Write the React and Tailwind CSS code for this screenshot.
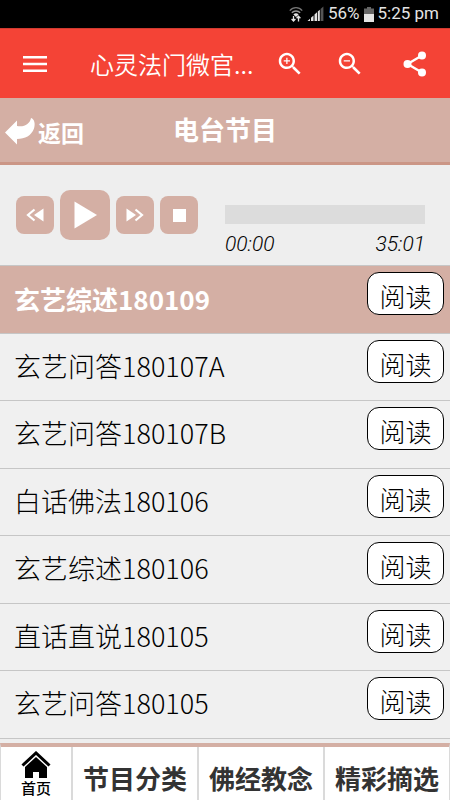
import React, { useState } from 'react';

const programs = [
  '玄艺综述180109',
  '玄艺问答180107A',
  '玄艺问答180107B',
  '白话佛法180106',
  '玄艺综述180106',
  '直话直说180105',
  '玄艺问答180105',
];

const tabs = ['节目分类', '佛经教念', '精彩摘选'];

const StatusBar = () => (
  <div className="flex h-7 items-center justify-end bg-black pr-[11px] font-['Roboto','Noto_Sans_CJK_SC',sans-serif] text-[17px] text-[#e4e4e4]">
    <svg width="14" height="16" viewBox="0 0 14 16" fill="none" className="mr-1">
      <path d="M0.8 4.6C4.2 0.6 9.8 0.6 13.2 4.6" stroke="#777" strokeWidth="1.4" />
      <path d="M2.8 6.8C5 4.4 9 4.4 11.2 6.8" stroke="#999" strokeWidth="1.3" />
      <path d="M4.4 8.4C5.8 7 8.2 7 9.6 8.4L7 11z" fill="#e4e4e4" />
      <path d="M4.5 10v5M2.6 13l1.9 2 1.9-2M9.5 15.5v-5M7.6 12.3l1.9-2 1.9 2" stroke="#e4e4e4" strokeWidth="1.3" />
    </svg>
    <svg width="17" height="16" viewBox="0 0 17 16" className="mr-1">
      <path d="M0.5 15L3 12.700V15zM4 11.800l2.500-2.300V15H4zM7.500 8.600L10 6.300V15H7.500z" fill="#e4e4e4" />
      <path d="M10.800 5.600l2-1.900V15h-2z" fill="#e4e4e4" />
      <path d="M13.600 3l2.800-2.500V15h-2.800z" fill="#555" />
    </svg>
    <span>56%</span>
    <svg width="10" height="15" viewBox="0 0 10 15" className="mx-1">
      <path d="M3 0h4v1.5h3v6H0v-6h3z" fill="#666" />
      <path d="M0 7h10v8H0z" fill="#e4e4e4" />
    </svg>
    <span>5:25 pm</span>
  </div>
);

const AppBar = () => (
  <header className="flex h-[70px] items-center border-t border-[#d03a30] bg-[#f44336] px-[23px] text-white">
    <button aria-label="菜单">
      <svg width="24" height="18" viewBox="0 0 24 18" fill="currentColor">
        <path d="M0 1h24v2.600H0zM0 7.700h24v2.600H0zM0 14.400h24V17H0z" />
      </svg>
    </button>
    <h1 className="ml-[43px] flex-1 text-2xl font-[350] whitespace-nowrap">心灵法门微官...</h1>
    <button aria-label="放大" className="mr-[30px]">
      <svg width="30" height="30" viewBox="0 0 24 24" fill="currentColor">
        <path d="M15.500 14h-.79l-.28-.27C15.410 12.590 16 11.110 16 9.500 16 5.910 13.090 3 9.500 3S3 5.910 3 9.500 5.910 16 9.500 16c1.610 0 3.090-.59 4.230-1.570l.27.28v.79l5 4.990L20.490 19l-4.990-5zm-6 0C7.010 14 5 11.990 5 9.500S7.010 5 9.500 5 14 7.010 14 9.500 11.990 14 9.500 14zm2.500-4h-2v2H9v-2H7V9h2V7h1v2h2v1z" />
      </svg>
    </button>
    <button aria-label="缩小" className="mr-[38px]">
      <svg width="30" height="30" viewBox="0 0 24 24" fill="currentColor">
        <path d="M15.500 14h-.79l-.28-.27C15.410 12.590 16 11.110 16 9.500 16 5.910 13.090 3 9.500 3S3 5.910 3 9.500 5.910 16 9.500 16c1.610 0 3.090-.59 4.230-1.570l.27.28v.79l5 4.990L20.490 19l-4.990-5zm-6 0C7.010 14 5 11.990 5 9.500S7.010 5 9.500 5 14 7.010 14 9.500 11.990 14 9.500 14zM7 9h5v1H7z" />
      </svg>
    </button>
    <button aria-label="分享">
      <svg width="24" height="26" viewBox="0 0 24 26" fill="currentColor">
        <path d="M4.500 13L19 4.500M4.500 13L19 21.500" stroke="currentColor" strokeWidth="2.400" />
        <circle cx="4.500" cy="13" r="4" />
        <circle cx="19" cy="4.500" r="4" />
        <circle cx="19" cy="21.500" r="4" />
      </svg>
    </button>
  </header>
);

const PageHeader = () => (
  <div className="grid h-[67px] grid-cols-[1fr_auto_1fr] items-center border-b-[3px] border-[#cb9686] bg-[#d4afa4] font-bold text-white">
    <a href="#back" className="flex items-center gap-[2px] pt-1 pl-1 text-[23px]">
      <svg width="32" height="28" viewBox="0 0 32 28" fill="currentColor">
        <path d="M1 14.500L13 2.500v5.500C20 9.500 26 6 27 0c3.500 1 4.500 6 3 10.500-2.500 7-9 10.500-17 10.500v5.500z" />
      </svg>
      返回
    </a>
    <h2 className="pb-1 text-[26px]">电台节目</h2>
  </div>
);

const Player = () => {
  const [playing, setPlaying] = useState(false);
  const small = 'flex h-[38px] w-[38px] items-center justify-center rounded-lg bg-[#d4afa4]';

  return (
    <section className="flex h-[100px] items-center justify-between pr-[25px] pl-4">
      <div className="flex items-center gap-[6px] text-white">
        <button aria-label="快退" className={small}>
          <svg width="18" height="14" viewBox="0 0 18 14">
            <path d="M8.500 1.500L2 7l6.500 5.500" fill="none" stroke="currentColor" strokeWidth="2.200" />
            <path d="M17.500 0.500v13L8 7z" fill="currentColor" />
          </svg>
        </button>
        <button
          aria-label={playing ? '暂停' : '播放'}
          onClick={() => setPlaying(!playing)}
          className="flex h-[50px] w-[50px] items-center justify-center rounded-[10px] bg-[#d4afa4]"
        >
          <svg width="24" height="28" viewBox="0 0 24 28" fill="currentColor">
            {playing ? <path d="M3 2h6v24H3zM15 2h6v24h-6z" /> : <path d="M1.500 0.500v27L24 14z" />}
          </svg>
        </button>
        <button aria-label="快进" className={small}>
          <svg width="18" height="14" viewBox="0 0 18 14">
            <path d="M9.500 1.500L16 7l-6.500 5.500" fill="none" stroke="currentColor" strokeWidth="2.200" />
            <path d="M0.500 0.500v13L10 7z" fill="currentColor" />
          </svg>
        </button>
        <button aria-label="停止" className={small}>
          <span className="h-[13px] w-[13px] bg-white" />
        </button>
      </div>
      <div className="w-[200px] pt-8">
        <progress
          aria-label="播放进度"
          value="0"
          max="2101"
          className="block h-[19px] w-full appearance-none bg-[#dcdcdc] [&::-webkit-progress-bar]:bg-[#dcdcdc] [&::-webkit-progress-value]:bg-[#d4afa4]"
        />
        <div className="flex justify-between pt-[6px] font-['Roboto',sans-serif] text-[21px] leading-7 font-light text-black italic">
          <span>00:00</span>
          <span>35:01</span>
        </div>
      </div>
    </section>
  );
};

const ProgramRow = ({ title, active, onSelect }) => (
  <li
    className={`flex items-center justify-between border-t border-[#c6c6c6] pr-[6px] pl-[14px] ${
      active ? 'bg-[#d4afa4] text-[26px] font-bold text-white' : 'bg-[#f0f0f0] text-[27px] font-light text-black'
    }`}
  >
    <button onClick={onSelect} className="pb-[2px] text-left">
      {title}
    </button>
    <button className="mt-[6px] flex h-[43px] w-[77px] items-center justify-center self-start rounded-xl border border-black bg-white pt-1 text-[26px] font-light text-black">
      阅读
    </button>
  </li>
);

const BottomNav = () => (
  <nav className="grid h-[57px] grid-cols-[70px_1fr_1fr_1fr] border-x border-t-4 border-x-[#dadada] border-t-[#d4afa4] bg-white">
    <a href="#home" className="flex flex-col items-center pt-1 text-[15px] leading-5 font-medium text-black">
      <svg width="30" height="27" viewBox="0 0 30 27" fill="currentColor">
        <path d="M1.500 14.500L15 2l13.500 12.500" fill="none" stroke="currentColor" strokeWidth="3" />
        <path d="M15 6L4 16v11h8v-6h6v6h8V16z" />
      </svg>
      首页
    </a>
    {tabs.map((tab) => (
      <a
        key={tab}
        href={`#${tab}`}
        className="flex items-center justify-center border-l-2 border-[#dadada] pt-2 text-[26px] font-bold text-[#333]"
      >
        {tab}
      </a>
    ))}
  </nav>
);

const App = () => {
  const [current, setCurrent] = useState(0);

  return (
    <div className="flex min-h-screen flex-col bg-[#eee] font-['Noto_Sans_CJK_SC',sans-serif]">
      <StatusBar />
      <AppBar />
      <PageHeader />
      <Player />
      <main className="flex flex-1 flex-col pb-1">
        <ul className="grid flex-1 auto-rows-fr border-b border-[#c6c6c6]">
          {programs.map((title, i) => (
            <ProgramRow key={title} title={title} active={i === current} onSelect={() => setCurrent(i)} />
          ))}
        </ul>
      </main>
      <BottomNav />
    </div>
  );
};

export default App;
